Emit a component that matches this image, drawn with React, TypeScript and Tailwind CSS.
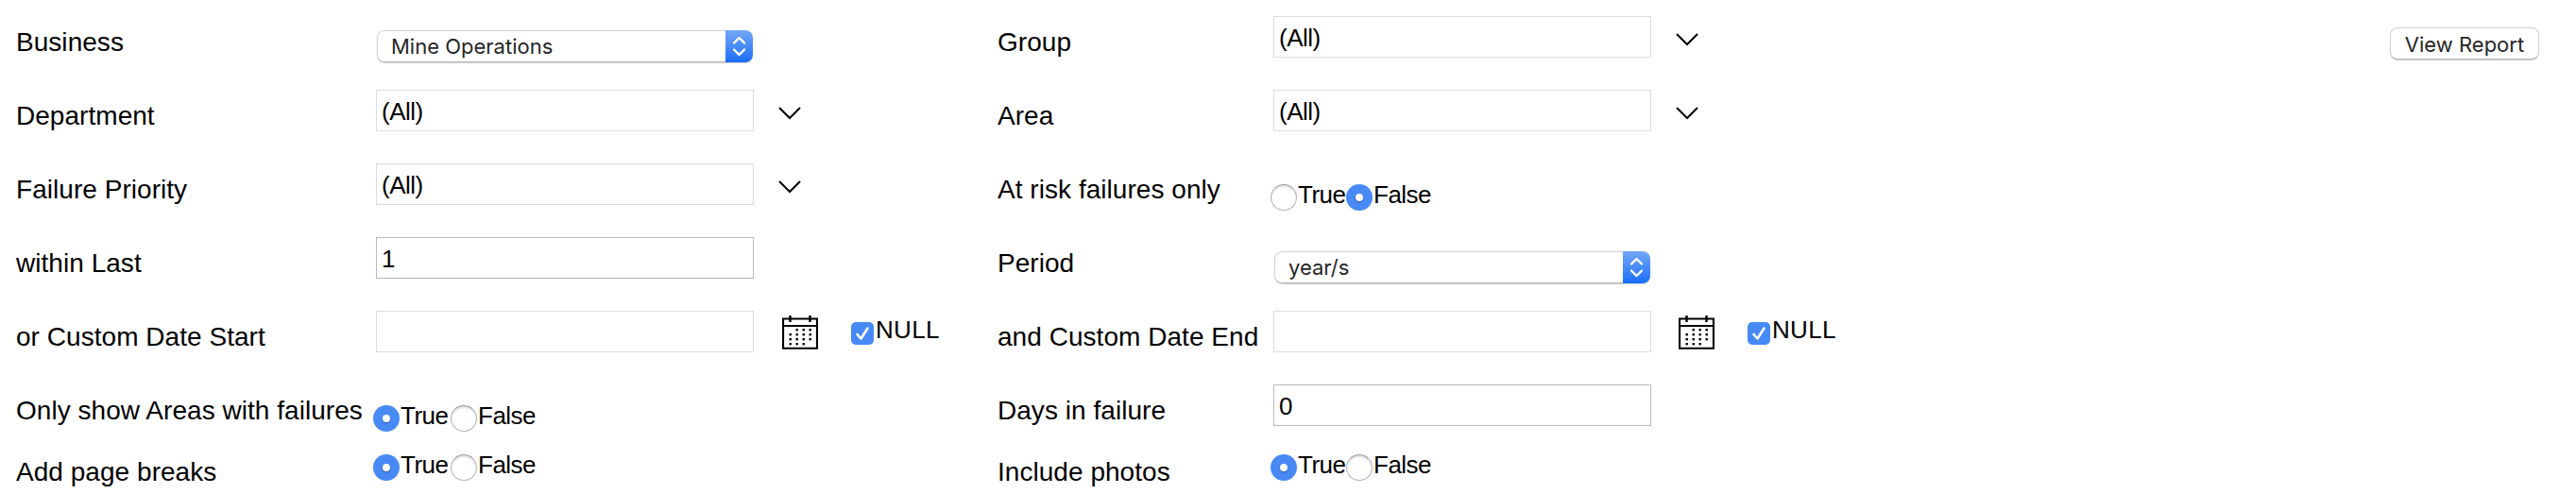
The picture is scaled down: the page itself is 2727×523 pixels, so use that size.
import { useState } from 'react'
import type { ReactNode } from 'react'

function Chevron() {
  return (
    <svg width="24" height="14" viewBox="0 0 24 14" className="ml-[26px] mt-[35px]" fill="none" stroke="#000" strokeWidth="2">
      <path d="M1 1 L12 12 L23 1" />
    </svg>
  )
}

function CalendarIcon() {
  const dots = [
    [15, 14], [22, 14], [29, 14],
    [8, 19], [15, 19], [22, 19], [29, 19],
    [8, 24], [15, 24], [22, 24], [29, 24],
    [8, 29], [15, 29], [22, 29],
  ]
  return (
    <svg width="38" height="36" viewBox="0 0 38 36">
      <path d="M1 3.5 H37 V34.75 H1 Z M0 11 H38" fill="none" stroke="#000" strokeWidth="2.2" />
      <path d="M8.5 0 V7 M29.5 0 V7" stroke="#000" strokeWidth="2.4" />
      {dots.map(([x, y]) => (
        <rect key={`${x}-${y}`} x={x - 0.5} y={y} width="2.4" height="2.4" />
      ))}
    </svg>
  )
}

function Row({ label, short, children }: { label: string; short?: boolean; children: ReactNode }) {
  return (
    <div className={short ? 'flex items-start h-[65px]' : 'flex items-start h-[78px]'}>
      <div className="w-[var(--label)] shrink-0 pt-[29px] text-[28px] leading-[31px] tracking-[0.04px] whitespace-nowrap">{label}</div>
      {children}
    </div>
  )
}

function TextBox({ value = '', strong }: { value?: string; strong?: boolean }) {
  return (
    <input
      type="text"
      defaultValue={value}
      className={`mt-[17px] w-[400px] h-[44px] shrink-0 border bg-white pl-[5px] pt-[8px] pb-[6px] text-[26px] leading-[30px] tracking-[-0.5px] text-black outline-none ${
        strong ? 'border-[#b9b9b9]' : 'border-[#dddddd]'
      }`}
    />
  )
}

function DropDown({ value = '(All)' }: { value?: string }) {
  return (
    <>
      <TextBox value={value} />
      <Chevron />
    </>
  )
}

function Select({ value }: { value: string }) {
  return (
    <button className="mt-[32px] ml-px flex w-[398px] h-[34px] shrink-0 overflow-hidden rounded-[8px] bg-white text-left shadow-[0_1px_1px_rgba(0,0,0,0.2)]">
      <span className="flex-1 h-full rounded-l-[8px] border border-r-0 border-[#d2d2d2] border-b-[#b8b8b8] pl-[14px] pt-[3px] font-['Inter',sans-serif] text-[22px] leading-[26px] text-[#262626]">
        {value}
      </span>
      <span className="flex w-[29px] h-full items-center justify-center bg-linear-to-b from-[#72a7f6] to-[#166cfa]">
        <svg width="15" height="22" viewBox="0 0 15 22" fill="none" stroke="#fff" strokeWidth="2.4" strokeLinecap="round" strokeLinejoin="round">
          <path d="M2 7.5 L7.5 2 L13 7.5 M2 14.5 L7.5 20 L13 14.5" />
        </svg>
      </span>
    </button>
  )
}

function Radio({ label, checked, onSelect }: { label: string; checked: boolean; onSelect: () => void }) {
  return (
    <button onClick={onSelect} className="flex items-start text-[26px] leading-[30px] tracking-[-0.5px]">
      {checked ? (
        <span className="mt-1 flex size-7 items-center justify-center rounded-full bg-[#488af5]">
          <span className="size-2 rounded-full bg-white shadow-[0_1px_2px_rgba(0,0,0,0.35)]" />
        </span>
      ) : (
        <span className="mt-1 size-7 rounded-full border border-[#b4b4b4] border-t-[#9a9a9a] bg-white shadow-[inset_0_2px_2px_rgba(0,0,0,0.12)]" />
      )}
      <span className="w-[51px] pl-px text-left">{label}</span>
    </button>
  )
}

function TrueFalse({ initial, short, tight }: { initial: boolean; short?: boolean; tight?: boolean }) {
  const [value, setValue] = useState(initial)
  return (
    <div className={`-ml-[3px] flex ${short ? 'mt-[22px]' : 'mt-[35px]'} ${tight ? 'gap-px' : 'gap-[3px]'}`}>
      <Radio label="True" checked={value} onSelect={() => setValue(true)} />
      <Radio label="False" checked={!value} onSelect={() => setValue(false)} />
    </div>
  )
}

function DateField() {
  const [isNull, setIsNull] = useState(true)
  return (
    <>
      <TextBox />
      <div className="ml-[var(--cal)] mt-[22px] flex w-[180px] items-start">
        <CalendarIcon />
        <button onClick={() => setIsNull(!isNull)} className="ml-[35px] flex items-start text-[26px] leading-[30px] tracking-[0.3px]">
          <span className={`mt-[7px] size-6 rounded-[5px] ${isNull ? 'bg-[#488af5]' : 'border border-[#b4b4b4]'}`}>
            {isNull && (
              <svg width="24" height="24" viewBox="0 0 24 24" fill="none" stroke="#fff" strokeWidth="2.6" strokeLinecap="round" strokeLinejoin="round">
                <path d="M6.5 13 L10.5 17.5 L17.5 6.5" />
              </svg>
            )}
          </span>
          <span className="pl-[2px]">NULL</span>
        </button>
      </div>
    </>
  )
}

export default function App() {
  return (
    <div className="flex h-[523px] w-[2727px] overflow-hidden bg-white pl-[17px] font-['Liberation_Sans',Arial,sans-serif] text-black">
      {/* Left parameters */}
      <div className="w-[1039px] shrink-0 [--cal:30px] [--label:381px]">
        <Row label="Business"><Select value="Mine Operations" /></Row>
        <Row label="Department"><DropDown /></Row>
        <Row label="Failure Priority"><DropDown /></Row>
        <Row label="within Last"><TextBox value="1" strong /></Row>
        <Row label="or Custom Date Start"><DateField /></Row>
        <Row label="Only show Areas with failures" short><TrueFalse initial /></Row>
        <Row label="Add page breaks" short><TrueFalse initial short /></Row>
      </div>

      {/* Right parameters */}
      <div className="flex-1 [--cal:29px] [--label:292px]">
        <Row label="Group"><DropDown /></Row>
        <Row label="Area"><DropDown /></Row>
        <Row label="At risk failures only"><TrueFalse initial={false} tight /></Row>
        <Row label="Period"><Select value="year/s" /></Row>
        <Row label="and Custom Date End"><DateField /></Row>
        <Row label="Days in failure" short><TextBox value="0" strong /></Row>
        <Row label="Include photos" short><TrueFalse initial short tight /></Row>
      </div>

      <div className="pr-[39px] pt-[29px]">
        <button className="flex h-[34px] w-[158px] justify-center rounded-[8px] border border-[#d2d2d2] border-b-[#b8b8b8] bg-white pt-[4px] font-['Inter',sans-serif] text-[22px] leading-[26px] whitespace-nowrap text-[#262626] shadow-[0_1px_1px_rgba(0,0,0,0.2)]">
          View Report
        </button>
      </div>
    </div>
  )
}
